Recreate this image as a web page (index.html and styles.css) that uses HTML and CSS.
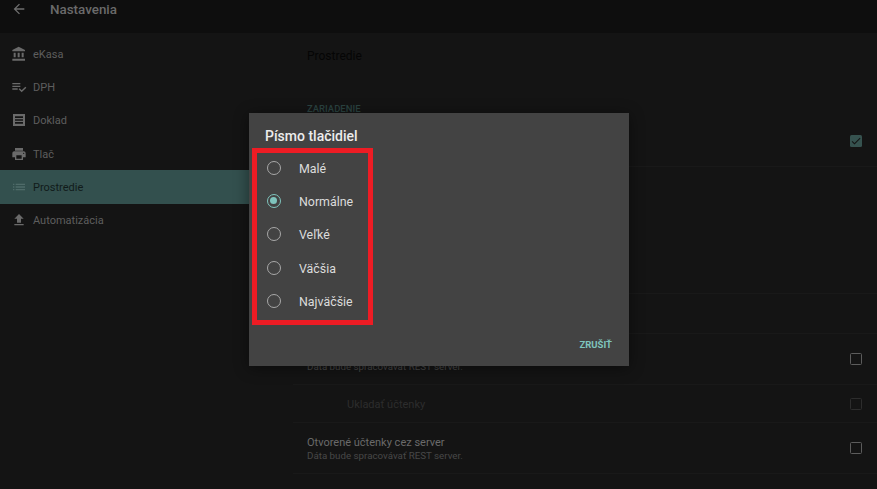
FILE: index.html
```html
<!DOCTYPE html>
<html lang="sk">

<head>
  <meta charset="UTF-8">
  <title>Nastavenia</title>
  <link rel="stylesheet" href="styles.css">
</head>

<body>
  <header class="appbar">
    <svg class="back" viewBox="0 0 24 24"><path d="M20 11H7.83l5.59-5.59L12 4l-8 8 8 8 1.41-1.41L7.83 13H20v-2z"/></svg>
    <span class="appbar-title">Nastavenia</span>
  </header>

  <div class="content">
    <nav class="side">
      <div class="side-item">
        <svg viewBox="0 0 24 24"><path d="M4 10v7h3v-7H4zm6 0v7h3v-7h-3zM2 22h19v-3H2v3zm14-12v7h3v-7h-3zm-4.5-9L2 6v2h19V6l-9.5-5z"/></svg>
        <span>eKasa</span>
      </div>
      <div class="side-item">
        <svg viewBox="0 0 24 24"><path d="M14 10H2v2h12v-2zm0-4H2v2h12V6zM2 16h8v-2H2v2zm19.5-4.5L23 13l-6.99 7-4.51-4.5L13 14l3.01 3 5.49-5.5z"/></svg>
        <span>DPH</span>
      </div>
      <div class="side-item">
        <svg viewBox="0 0 24 24"><path fill-rule="evenodd" d="M3 3h18v18H3V3zm3 3.5v2.5h12V6.5H6zm0 4.25v2.5h12v-2.5H6zM6 15v2.5h12V15H6z"/></svg>
        <span>Doklad</span>
      </div>
      <div class="side-item">
        <svg viewBox="0 0 24 24"><path d="M19 8H5c-1.66 0-3 1.34-3 3v6h4v4h12v-4h4v-6c0-1.66-1.34-3-3-3zm-3 11H8v-5h8v5zm3-7c-.55 0-1-.45-1-1s.45-1 1-1 1 .45 1 1-.45 1-1 1zm-1-9H6v4h12V3z"/></svg>
        <span>Tlač</span>
      </div>
      <div class="side-item active">
        <svg viewBox="0 0 24 24"><path d="M3 13h2v-2H3v2zm0 4h2v-2H3v2zm0-8h2V7H3v2zm4 4h14v-2H7v2zm0 4h14v-2H7v2zM7 7v2h14V7H7z"/></svg>
        <span>Prostredie</span>
      </div>
      <div class="side-item">
        <svg viewBox="0 0 24 24"><path d="M9 16h6v-6h4l-7-7-7 7h4zm-4 2h14v2H5z"/></svg>
        <span>Automatizácia</span>
      </div>
    </nav>

    <main class="main">
      <h2 class="main-title">Prostredie</h2>
      <div class="section-label">ZARIADENIE</div>
      <div class="row row-first">
        <span class="check checked">
          <svg viewBox="0 0 24 24"><path d="M9 16.2 4.8 12l-1.4 1.4L9 19 21 7l-1.4-1.4z"/></svg>
        </span>
      </div>
      <div class="row row-gap"></div>
      <div class="row row-gap2"></div>
      <div class="row row-two">
        <div>
          <div class="row-title">Otvorené účtenky cez server</div>
          <div class="row-sub">Dáta bude spracovávať REST server.</div>
        </div>
        <span class="check"></span>
      </div>
      <div class="row row-one">
        <div class="row-title row-disabled">Ukladať účtenky</div>
        <span class="check check-disabled"></span>
      </div>
      <div class="row row-two">
        <div>
          <div class="row-title">Otvorené účtenky cez server</div>
          <div class="row-sub">Dáta bude spracovávať REST server.</div>
        </div>
        <span class="check"></span>
      </div>
    </main>
  </div>

  <div class="dialog">
    <div class="dialog-title">Písmo tlačidiel</div>
    <div class="options">
      <div class="option"><span class="radio"></span><span class="option-text">Malé</span></div>
      <div class="option"><span class="radio on"></span><span class="option-text">Normálne</span></div>
      <div class="option"><span class="radio"></span><span class="option-text">Veľké</span></div>
      <div class="option"><span class="radio"></span><span class="option-text">Väčšia</span></div>
      <div class="option"><span class="radio"></span><span class="option-text">Najväčšie</span></div>
    </div>
    <div class="dialog-actions">
      <span class="cancel">ZRUŠIŤ</span>
    </div>
    <div class="marker"></div>
  </div>
</body>

</html>
```

FILE: styles.css
```css
html, body {
  height: 100%;
}

body {
  margin: 0;
  background-color: #141414;
  font-family: 'Roboto', sans-serif;
  overflow: hidden;
  position: relative;
}

.appbar {
  height: 33px;
  background-color: #0e0e0e;
  display: flex;
  align-items: flex-start;
}

.back {
  width: 16px;
  height: 16px;
  fill: #6f6f6f;
  margin: 1px 0 0 11px;
}

.appbar-title {
  margin: 2px 0 0 23px;
  font-size: 13.4px;
  line-height: 16px;
  font-weight: 500;
  color: #6a6a6a;
}

.content {
  display: flex;
}

.side {
  width: 293px;
  flex-shrink: 0;
  padding-top: 4px;
}

.side-item {
  height: 33.33px;
  display: flex;
  align-items: center;
  padding-left: 11px;
  gap: 6px;
  font-size: 11px;
  color: #5e5e5e;
}

.side-item span {
  margin-top: 1px;
}

.side-item svg {
  width: 16px;
  height: 16px;
  fill: #6a6a6a;
}

.side-item.active {
  background-color: #33504e;
  color: #111b1a;
}

.side-item.active svg {
  fill: #4f6b69;
}

.main {
  flex: 1;
}

.main-title {
  margin: 0;
  padding: 16px 0 0 14px;
  height: 39px;
  font-size: 12px;
  line-height: 14px;
  font-weight: 400;
  color: #050505;
}

.section-label {
  padding: 15px 0 0 14px;
  height: 11px;
  font-size: 9.5px;
  line-height: 12px;
  font-weight: 500;
  color: #2b4341;
}

.row {
  box-sizing: border-box;
  display: flex;
  justify-content: space-between;
  align-items: center;
  padding: 0 15px 0 14px;
  border-bottom: 1px solid #191919;
}

.row-first {
  height: 53px;
  padding-top: 2px;
}

.row-gap {
  height: 127px;
}

.row-gap2 {
  height: 40px;
}

.row-two {
  height: 51px;
}

.row-one {
  height: 38px;
  padding-top: 1px;
}

.row-title {
  font-size: 11px;
  line-height: 15px;
  color: #6a6a6a;
}

.row-sub {
  font-size: 9.75px;
  line-height: 12px;
  color: #484848;
}

.row-disabled {
  margin-left: 40px;
  color: #2d2d2d;
}

.check {
  box-sizing: border-box;
  width: 12px;
  height: 12px;
  margin-left: auto;
  border: 1.5px solid #5c5c5c;
  border-radius: 1.5px;
  display: block;
}

.check-disabled {
  border-color: #2d2d2d;
}

.checked {
  background-color: #36524f;
  border: none;
}

.checked svg {
  display: block;
  width: 12px;
  height: 12px;
  fill: #141414;
}

.dialog {
  position: absolute;
  left: 249px;
  top: 113px;
  width: 380px;
  height: 253px;
  background-color: #434343;
  box-shadow: 0 2px 14px rgba(0, 0, 0, 0.45);
}

.dialog-title {
  padding: 14px 0 0 16px;
  height: 24px;
  font-size: 14px;
  line-height: 18px;
  font-weight: 500;
  color: #ececec;
}

.options {
  height: 167px;
}

.option {
  height: 33.33px;
  display: flex;
  align-items: center;
  padding-left: 17.5px;
  font-size: 12.4px;
  color: #dcdcdc;
}

.option-text {
  margin-top: 1px;
}

.radio {
  box-sizing: border-box;
  width: 14px;
  height: 14px;
  border: 1.75px solid #a8a8a8;
  border-radius: 50%;
  margin-right: 18.5px;
  display: flex;
  align-items: center;
  justify-content: center;
}

.radio.on {
  border-color: #7fc4bd;
}

.radio.on::after {
  content: "";
  width: 7px;
  height: 7px;
  border-radius: 50%;
  background-color: #7fc4bd;
}

.dialog-actions {
  display: flex;
  justify-content: flex-end;
  padding: 21px 17px 0 0;
}

.cancel {
  font-size: 9.5px;
  line-height: 12px;
  font-weight: 700;
  color: #7fc4bd;
}

/* red annotation box over the options */
.marker {
  position: absolute;
  left: 3px;
  top: 35px;
  width: 121px;
  height: 177px;
  box-sizing: border-box;
  border: 5px solid #ed1c24;
}
```
